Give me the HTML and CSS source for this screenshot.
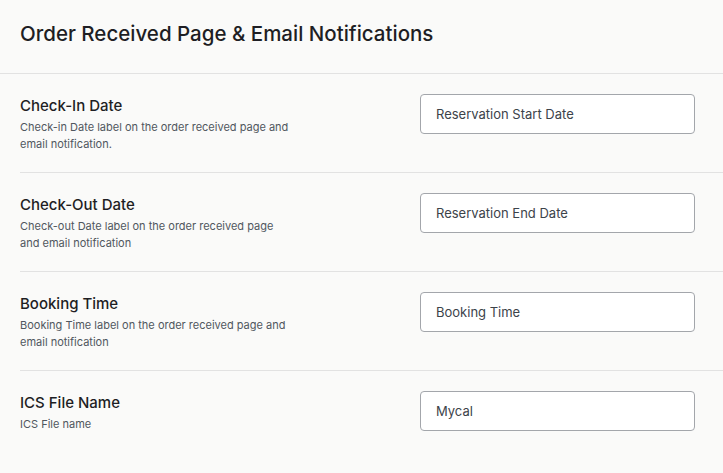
FILE: index.html
```html
<!DOCTYPE html>
<html>
<head>
<meta charset="utf-8">
<link rel="stylesheet" href="styles.css">
</head>
<body>
<div class="panel">
  <div class="header"><h1 class="title">Order Received Page &amp; Email Notifications</h1></div>
  <div class="rows">
    <div class="row">
      <div class="info">
        <div class="label">Check-In Date</div>
        <div class="desc">Check-in Date label on the order received page and email notification.</div>
      </div>
      <div class="field"><input class="input" type="text" value="Reservation Start Date"></div>
    </div>
    <div class="row">
      <div class="info">
        <div class="label">Check-Out Date</div>
        <div class="desc">Check-out Date label on the order received page and email notification</div>
      </div>
      <div class="field"><input class="input" type="text" value="Reservation End Date"></div>
    </div>
    <div class="row">
      <div class="info">
        <div class="label">Booking Time</div>
        <div class="desc">Booking Time label on the order received page and email notification</div>
      </div>
      <div class="field"><input class="input" type="text" value="Booking Time"></div>
    </div>
    <div class="row last">
      <div class="info">
        <div class="label">ICS File Name</div>
        <div class="desc">ICS File name</div>
      </div>
      <div class="field"><input class="input" type="text" value="Mycal"></div>
    </div>
  </div>
</div>
</body>
</html>
```
FILE: styles.css
```css
html, body {
  margin: 0;
  padding: 0;
  background: #fafaf9;
  font-family: Inter, "Noto Sans", sans-serif;
  color: #1e1e24;
}
.panel {
  width: 723px;
  height: 473px;
  overflow: hidden;
}
.header {
  height: 73px;
  border-bottom: 1px solid #e2e2e2;
  display: flex;
  align-items: center;
  padding-left: 20px;
}
.title {
  margin: 0;
  font-size: 20.5px;
  font-weight: 500;
  letter-spacing: 0;
  padding-bottom: 6px;
}
.rows {
  padding-left: 20px;
}
.row {
  display: flex;
  justify-content: space-between;
  align-items: flex-start;
  padding: 20px 0 19px;
  height: 59px;
  border-bottom: 1px solid #e2e2e2;
}
.row.last {
  border-bottom: none;
}
.info {
  width: 271px;
}
.label {
  font-size: 15px;
  font-weight: 500;
  line-height: 24px;
}
.desc {
  font-size: 11px;
  line-height: 17px;
  color: #50575e;
  margin-top: 1px;
}
.field {
  width: 275px;
  margin-right: 28px;
}
.input {
  box-sizing: border-box;
  width: 275px;
  height: 40px;
  border: 1px solid #a3a6ab;
  border-radius: 4px;
  background: #fff;
  padding: 0 15px;
  font-family: Inter, "Noto Sans", sans-serif;
  font-size: 13px;
  color: #3c434a;
  outline: none;
}
```
